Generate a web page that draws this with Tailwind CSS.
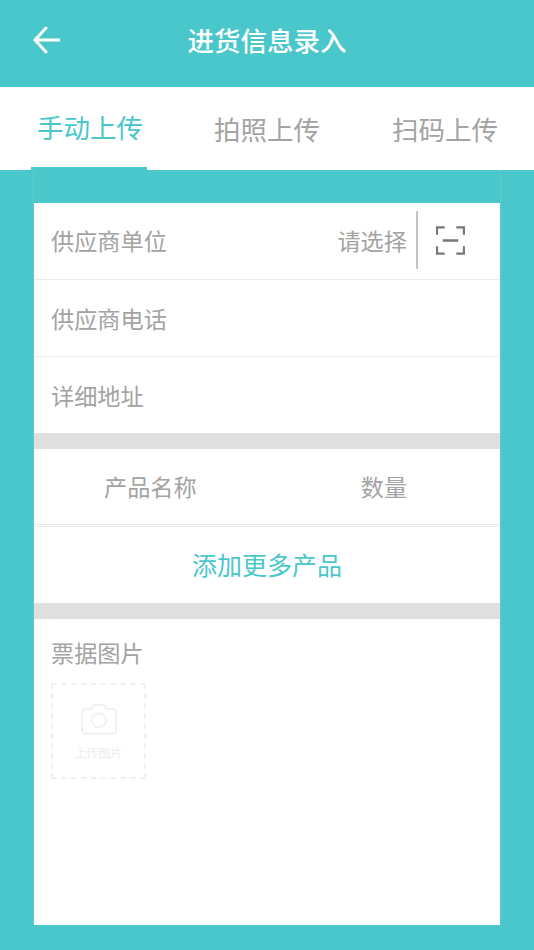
<!DOCTYPE html>
<html lang="zh">

<head>
    <meta charset="UTF-8">
    <meta name="viewport" content="width=device-width, initial-scale=1.0">
    <script src="https://cdn.jsdelivr.net/npm/@tailwindcss/browser@4"></script>
    <title>进货信息录入</title>
</head>

<body class="h-[950px] w-[534px] overflow-hidden bg-[#4ac7cb] font-['Noto_Sans_CJK_SC','Noto_Sans',sans-serif]">
    <header class="flex h-[87px] items-center justify-center relative">
        <button class="absolute left-[32px] top-[26px]">
            <svg class="w-[28px] h-[28px]" viewBox="0 0 28 28" fill="none" stroke="white" stroke-width="3" stroke-linecap="round" stroke-linejoin="round">
                <path d="M14 2 L3 14 L14 26 M3 14 H27"></path>
            </svg>
        </button>
        <h1 class="text-[26.5px] leading-none font-medium text-white -mt-[6px]">进货信息录入</h1>
    </header>

    <nav class="flex h-[83px] bg-white text-[26.5px] text-[#a3a3a3] relative">
        <a class="absolute left-[37px] top-[22px] leading-[36px] text-[#4ac7cb]">手动上传</a>
        <a class="absolute left-[214px] top-[24px] leading-[36px]">拍照上传</a>
        <a class="absolute left-[392px] top-[24px] leading-[36px]">扫码上传</a>
        <span class="absolute left-[31px] bottom-0 w-[116px] h-[3px] bg-[#4ac7cb]"></span>
    </nav>

    <div class="mx-[33px] h-[755px] border-x border-[#5ccdd1] pt-[33px]">
        <main class="h-[722px] bg-white text-[#a3a3a3] text-[23.2px]">
            <div class="flex h-[77px] items-center border-b border-[#ececec] pl-[17px]">
                <span class="-mt-[2px]">供应商单位</span>
                <span class="ml-auto mr-[9px] -mt-[2px]">请选择</span>
                <div class="flex h-[58px] w-[84px] items-center justify-center border-l-2 border-[#c4c4c4] -mt-[2px] pr-[17px]">
                    <svg class="w-[29px] h-[29px]" viewBox="0 0 30 30" fill="none" stroke="#777" stroke-width="2.4">
                        <path d="M1 9 V1.5 H9 M21 1.5 H29 V9 M1 21 V28.5 H9 M21 28.5 H29 V21 M7 15 H23"></path>
                    </svg>
                </div>
            </div>
            <div class="flex h-[77px] items-center border-b border-[#f0f0f0] pl-[17px]">供应商电话</div>
            <div class="flex h-[76px] items-center pl-[17px]">详细地址</div>
            <div class="h-[16px] bg-[#dfdfdf]"></div>

            <div class="flex h-[78px] items-center border-b-[3px] border-double border-[#ececec]">
                <span class="ml-[70px]">产品名称</span>
                <span class="ml-[164px]">数量</span>
            </div>
            <div class="flex h-[76px] items-center justify-center text-[#4ac7cb] text-[25px]">添加更多产品</div>
            <div class="h-[16px] bg-[#dfdfdf]"></div>

            <div class="pl-[17px] pt-[16px]">
                <p class="leading-[34px]">票据图片</p>
                <div class="mt-[14px] flex h-[96px] w-[95px] flex-col items-center border-2 border-dashed border-[#f1f1f1]">
                    <svg class="mt-[18px] w-[36px] h-[32px]" viewBox="0 0 38 33" fill="none" stroke="#f1f1f1" stroke-width="2">
                        <path d="M5 6 H11 L14 1.5 H24 L27 6 H33 Q37 6 37 10 V28 Q37 32 33 32 H5 Q1 32 1 28 V10 Q1 6 5 6 Z"></path>
                        <circle cx="19" cy="18" r="7.5"></circle>
                    </svg>
                    <span class="mt-[10px] text-[12px] leading-[16px] text-[#ececec]">上传图片</span>
                </div>
            </div>
        </main>
    </div>
</body>

</html>
